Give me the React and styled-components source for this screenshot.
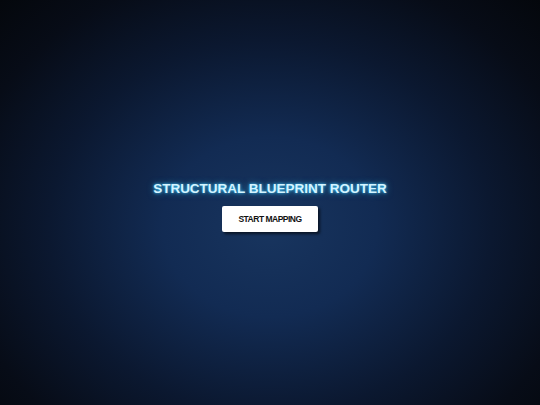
import styled, { createGlobalStyle } from 'styled-components';

const GlobalStyle = createGlobalStyle`
    html, body {
        margin: 0;
        padding: 0;
        height: 100%;
    }
    #root {
        height: 100%;
    }
`;

const App = () => {
    return (
        <>
            <GlobalStyle />
            <StyledScreen>
                <StyledTitle>STRUCTURAL BLUEPRINT ROUTER</StyledTitle>
                <StyledButton type="button">START MAPPING</StyledButton>
            </StyledScreen>
        </>
    );
};
export default App;


const StyledScreen = styled.div`
    width: 100%;
    height: 100vh;
    box-sizing: border-box;
    padding-top: 8px;
    display: flex;
    flex-direction: column;
    align-items: center;
    justify-content: center;
    gap: 10px;
    background: radial-gradient(ellipse at 50% 56%, #18355f 0%, #122b53 28%, #0b1830 58%, #070c17 82%, #04070c 100%);
    font-family: "Liberation Sans", Arial, sans-serif;
`;

const StyledTitle = styled.h1`
    margin: 0;
    font-size: 13.5px;
    font-weight: 700;
    color: #d4f4ff;
    text-shadow: 0 0 3px #3cc8ff, 0 0 7px rgba(60, 200, 255, 0.6);
`;

const StyledButton = styled.button`
    width: 96px;
    height: 26px;
    border: none;
    border-radius: 2px;
    background: #fff;
    color: #111;
    font-family: inherit;
    font-size: 8.5px;
    font-weight: 700;
    letter-spacing: -0.5px;
    box-shadow: 2px 2px 3px rgba(0, 0, 0, 0.6);
    cursor: pointer;
`;
